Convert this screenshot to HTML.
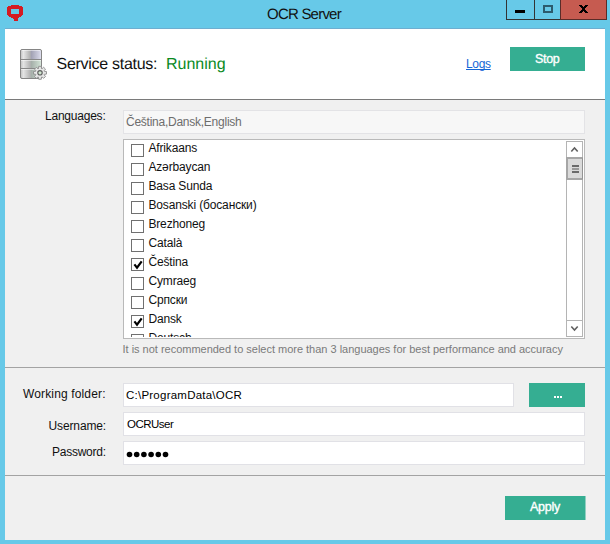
<!DOCTYPE html>
<html><head><meta charset="utf-8">
<style>
*{margin:0;padding:0;box-sizing:border-box}
html,body{width:610px;height:544px;overflow:hidden;background:#67c9e8;font-family:"Liberation Sans",sans-serif;color:#000}
.a{position:absolute;display:block}
.t{position:absolute;white-space:nowrap;line-height:1}
.btn{position:absolute;background:#35ae92}
.tb{position:absolute;background:#fff;border:1px solid #e1e1e6}
.cb{position:absolute;left:131px;width:13px;height:13px;border:1px solid #707070;background:#fff}
.it{position:absolute;font-size:12px;line-height:1;white-space:nowrap;color:#111}
</style></head><body>
<!-- title bar -->
<svg class="a" style="left:0;top:0" width="30" height="28" shape-rendering="crispEdges"><path fill="#d51a22" d="M11 5h8v1h-8zM8 6h14v1h-14zM7 7h16v1h-16zM7 8h16v1h-16zM7 9h4v1h-4zM19 9h4v1h-4zM7 10h4v1h-4zM19 10h4v1h-4zM7 11h4v1h-4zM19 11h4v1h-4zM7 12h4v1h-4zM19 12h4v1h-4zM7 13h4v1h-4zM19 13h4v1h-4zM7 14h16v1h-16zM8 15h14v1h-14zM9 16h12v1h-12zM11 17h8v1h-8zM13 18h5v1h-5zM14 19h4v1h-4zM14 20h4v1h-4z"/></svg>
<div class="a" style="left:506px;top:0;width:55px;height:20px;border:1px solid #333;border-top:0"></div>
<div class="a" style="left:534px;top:0;width:1px;height:20px;background:#333"></div>
<div class="a" style="left:515px;top:10px;width:10px;height:3px;background:#000"></div>
<div class="a" style="left:543px;top:5px;width:10px;height:8px;border:2px solid #2c5b6d"></div>
<div class="a" style="left:560px;top:0;width:47px;height:20px;background:#c65b50;border:1px solid #5a2c28;border-top:0"></div>
<svg class="a" style="left:0;top:0" width="610" height="20" shape-rendering="crispEdges"><path fill="#000" d="M579 5h3v1h-3zM585 5h3v1h-3zM580 6h3v1h-3zM584 6h3v1h-3zM581 7h5v1h-5zM582 8h3v2h-3zM581 10h5v1h-5zM580 11h3v1h-3zM584 11h3v1h-3zM579 12h3v1h-3zM585 12h3v1h-3z"/></svg>

<!-- content -->
<div class="a" style="left:5px;top:29px;width:600px;height:511px;background:#f0f0f0"></div>
<div class="a" style="left:5px;top:28px;width:600px;height:1px;background:#6eaed0"></div>
<div class="a" style="left:5px;top:29px;width:600px;height:70px;background:#fff"></div>
<div class="a" style="left:5px;top:99px;width:600px;height:1px;background:#7a7a7a"></div>
<div class="a" style="left:5px;top:367px;width:600px;height:1px;background:#a3a3a3"></div>
<div class="a" style="left:5px;top:475px;width:600px;height:1px;background:#a3a3a3"></div>

<!-- server icon -->
<svg class="a" style="left:16px;top:45px" width="36" height="40" viewBox="16 45 36 40">
<defs>
<linearGradient id="g1" x1="0" x2="1"><stop offset="0" stop-color="#c6c6c6"/><stop offset="0.12" stop-color="#e6e6e6"/><stop offset="0.45" stop-color="#b2b2b2"/><stop offset="0.52" stop-color="#a2a2b4"/><stop offset="0.9" stop-color="#cfcfe0"/><stop offset="1" stop-color="#dedeee"/></linearGradient>
<linearGradient id="g2" x1="0" x2="1"><stop offset="0" stop-color="#c6c6c6"/><stop offset="0.12" stop-color="#e4e4e4"/><stop offset="0.45" stop-color="#b4b4b4"/><stop offset="0.52" stop-color="#a6b0aa"/><stop offset="0.9" stop-color="#c8d8cc"/><stop offset="1" stop-color="#d8e6da"/></linearGradient>
</defs>
<rect x="20.5" y="49.5" width="21" height="29" rx="1.5" fill="#888"/>
<rect x="21" y="50" width="20" height="9" fill="url(#g1)"/>
<rect x="21" y="50" width="20" height="1" fill="#fff" opacity="0.5"/>
<rect x="21" y="60" width="20" height="8" fill="url(#g2)"/>
<rect x="21" y="60" width="20" height="1" fill="#fff" opacity="0.5"/>
<rect x="21" y="69" width="20" height="9" fill="url(#g2)"/>
<rect x="21" y="69" width="20" height="1" fill="#fff" opacity="0.5"/>
<rect x="20.5" y="49.5" width="21" height="29" rx="1.5" fill="none" stroke="#858585"/>
<g transform="translate(40,72.8)">
<path fill="#e6e6e6" stroke="#8c8c8c" stroke-width="0.9" d="M4.35 -1.49 L6.47 -1.31 L6.47 1.31 L4.35 1.49 L4.13 2.02 L5.50 3.65 L3.65 5.50 L2.02 4.13 L1.49 4.35 L1.31 6.47 L-1.31 6.47 L-1.49 4.35 L-2.02 4.13 L-3.65 5.50 L-5.50 3.65 L-4.13 2.02 L-4.35 1.49 L-6.47 1.31 L-6.47 -1.31 L-4.35 -1.49 L-4.13 -2.02 L-5.50 -3.65 L-3.65 -5.50 L-2.02 -4.13 L-1.49 -4.35 L-1.31 -6.47 L1.31 -6.47 L1.49 -4.35 L2.02 -4.13 L3.65 -5.50 L5.50 -3.65 L4.13 -2.02Z"/>
<circle r="2.2" fill="#cfe6cf" stroke="#606060" stroke-width="1.2"/>
</g>
</svg>
<div class="btn" style="left:510px;top:47px;width:75px;height:24px"></div>

<!-- languages -->
<div class="a" style="left:123px;top:110px;width:462px;height:24px;background:#f7f7f7;border:1px solid #e3e3e6"></div>
<div class="a" style="left:123px;top:139px;width:462px;height:200px;background:#fff;border:1px solid #b9b9b9"></div>
<div class="a" style="left:124px;top:140px;width:442px;height:197px;overflow:hidden">
<div class="a" style="left:-124px;top:-140px;width:610px;height:544px">
<div class="cb" style="top:144px"></div>
<div class="it" style="left:148.40px;top:142.00px;letter-spacing:-0.142px">Afrikaans</div>
<div class="cb" style="top:163px"></div>
<div class="it" style="left:148.40px;top:161.00px;letter-spacing:-0.142px">Azərbaycan</div>
<div class="cb" style="top:182px"></div>
<div class="it" style="left:148.40px;top:180.00px;letter-spacing:-0.142px">Basa Sunda</div>
<div class="cb" style="top:201px"></div>
<div class="it" style="left:148.40px;top:199.00px;letter-spacing:-0.142px">Bosanski (босански)</div>
<div class="cb" style="top:220px"></div>
<div class="it" style="left:148.40px;top:218.00px;letter-spacing:-0.142px">Brezhoneg</div>
<div class="cb" style="top:239px"></div>
<div class="it" style="left:148.40px;top:237.00px;letter-spacing:-0.142px">Català</div>
<div class="cb" style="top:258px"></div>
<svg class="a" style="left:131px;top:258px" width="13" height="13"><path d="M3.4 6.4L6 9.6L10.7 3.4" fill="none" stroke="#000" stroke-width="2.2"/></svg>
<div class="it" style="left:148.40px;top:256.00px;letter-spacing:-0.142px">Čeština</div>
<div class="cb" style="top:277px"></div>
<div class="it" style="left:148.40px;top:275.00px;letter-spacing:-0.142px">Cymraeg</div>
<div class="cb" style="top:296px"></div>
<div class="it" style="left:148.40px;top:294.00px;letter-spacing:-0.142px">Српски</div>
<div class="cb" style="top:315px"></div>
<svg class="a" style="left:131px;top:315px" width="13" height="13"><path d="M3.4 6.4L6 9.6L10.7 3.4" fill="none" stroke="#000" stroke-width="2.2"/></svg>
<div class="it" style="left:148.40px;top:313.00px;letter-spacing:-0.142px">Dansk</div>
<div class="cb" style="top:334px"></div>
<div class="it" style="left:148.40px;top:332.00px;letter-spacing:-0.142px">Deutsch</div>
</div></div>

<!-- scrollbar -->
<div class="a" style="left:566px;top:141px;width:17px;height:196px;border:1px solid #b4b4b4;border-top:0;border-bottom:0;background:#fff"></div>
<div class="a" style="left:566px;top:141px;width:17px;height:17px;border:1px solid #b4b4b4;background:#fff"></div>
<svg class="a" style="left:566px;top:141px" width="17" height="17"><path d="M5.3 10.5L8.5 7L11.7 10.5" fill="none" stroke="#606060" stroke-width="1.6"/></svg>
<div class="a" style="left:566px;top:157px;width:17px;height:23px;border:2px solid #a6a6a6;border-right:1px solid #939393;background:#dadada"></div>
<div class="a" style="left:572px;top:165px;width:7px;height:2px;background:#6a6a6a"></div>
<div class="a" style="left:572px;top:168px;width:7px;height:2px;background:#999"></div>
<div class="a" style="left:572px;top:171px;width:7px;height:2px;background:#6a6a6a"></div>
<div class="a" style="left:566px;top:320px;width:17px;height:17px;border:1px solid #b4b4b4;background:#fff"></div>
<svg class="a" style="left:566px;top:320px" width="17" height="17"><path d="M5.3 6.5L8.5 10L11.7 6.5" fill="none" stroke="#606060" stroke-width="1.6"/></svg>

<!-- form -->
<div class="tb" style="left:123px;top:383px;width:391px;height:24px"></div>
<div class="btn" style="left:529px;top:383px;width:56px;height:24px"></div>
<svg class="a" style="left:554px;top:396px" width="8" height="2"><rect x="0" y="0" width="2" height="2" fill="#fff"/><rect x="3" y="0" width="2" height="2" fill="#fff"/><rect x="6" y="0" width="2" height="2" fill="#fff"/></svg>
<div class="tb" style="left:123px;top:412px;width:462px;height:24px"></div>
<div class="tb" style="left:123px;top:441px;width:462px;height:24px"></div>
<svg class="a" style="left:126px;top:451px" width="46" height="7"><g fill="#000"><circle cx="3.5" cy="3.5" r="2.8"/><circle cx="10.7" cy="3.5" r="2.8"/><circle cx="17.9" cy="3.5" r="2.8"/><circle cx="25.1" cy="3.5" r="2.8"/><circle cx="32.3" cy="3.5" r="2.8"/><circle cx="39.5" cy="3.5" r="2.8"/></g></svg>

<div class="btn" style="left:505px;top:496px;width:80px;height:24px"></div><div class="a" style="left:585px;top:496px;width:1px;height:24px;background:#92cfc1"></div>

<div class="t" id="title" style="left:267.00px;top:6.83px;font-size:15px;font-weight:400;color:#111;letter-spacing:-0.778px;text-rendering:geometricPrecision;">OCR Server</div>
<div class="t" id="svc" style="left:56.50px;top:57.40px;font-size:16px;font-weight:400;color:#111;letter-spacing:-0.286px;text-rendering:geometricPrecision;">Service status:</div>
<div class="t" id="run" style="left:166.00px;top:57.40px;font-size:16px;font-weight:400;color:#0a8a1e;letter-spacing:0.000px;text-rendering:geometricPrecision;">Running</div>
<div class="t" id="logs" style="left:466.00px;top:57.80px;font-size:12px;font-weight:400;color:#1466d6;letter-spacing:-0.333px;text-decoration:underline;text-decoration-skip-ink:none;">Logs</div>
<div class="t" id="stop" style="left:535.00px;top:52.80px;font-size:12.5px;font-weight:400;color:#fff;letter-spacing:-0.333px;-webkit-text-stroke:0.35px #fff;">Stop</div>
<div class="t" id="lang" style="left:45.00px;top:109.80px;font-size:12px;font-weight:400;color:#111;letter-spacing:-0.222px;">Languages:</div>
<div class="t" id="ces" style="left:126.00px;top:115.80px;font-size:12px;font-weight:400;color:#6d6d6d;letter-spacing:-0.250px;">Čeština,Dansk,English</div>
<div class="t" id="hint" style="left:122.50px;top:343.65px;font-size:11px;font-weight:400;color:#7a7a7a;letter-spacing:-0.012px;">It is not recommended to select more than 3 languages for best performance and accuracy</div>
<div class="t" id="wf" style="left:23.00px;top:387.80px;font-size:12px;font-weight:400;color:#111;letter-spacing:0.143px;">Working folder:</div>
<div class="t" id="user" style="left:48.50px;top:419.80px;font-size:12px;font-weight:400;color:#111;letter-spacing:-0.125px;">Username:</div>
<div class="t" id="pass" style="left:52.00px;top:445.80px;font-size:12px;font-weight:400;color:#111;letter-spacing:-0.250px;">Password:</div>
<div class="t" id="cpath" style="left:126.00px;top:389.80px;font-size:11.5px;font-weight:400;color:#000;letter-spacing:0.235px;">C:\ProgramData\OCR</div>
<div class="t" id="ocru" style="left:127.00px;top:418.80px;font-size:11.5px;font-weight:400;color:#000;letter-spacing:-0.500px;">OCRUser</div>
<div class="t" id="apply" style="left:530.00px;top:500.80px;font-size:12.5px;font-weight:400;color:#fff;letter-spacing:-0.250px;-webkit-text-stroke:0.35px #fff;">Apply</div>
</body></html>
